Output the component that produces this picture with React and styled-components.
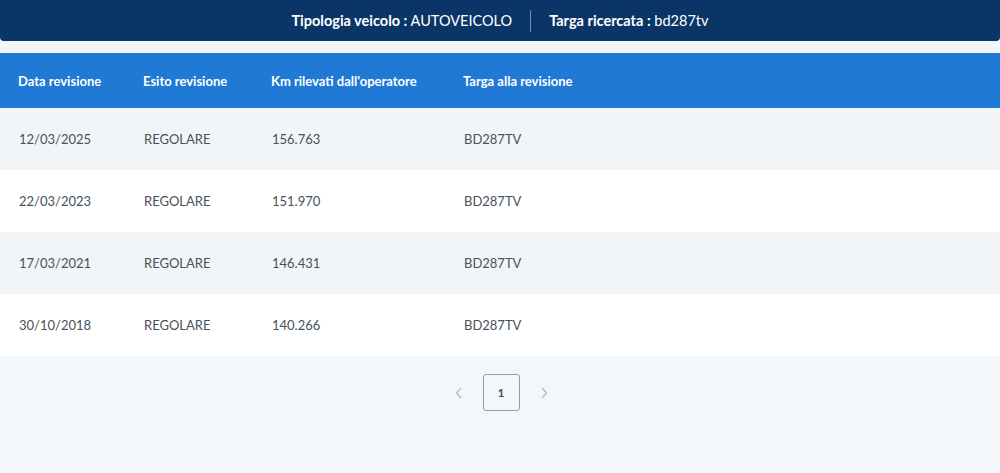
import React from 'react';
import styled, { createGlobalStyle } from 'styled-components';

const Global = createGlobalStyle`
  html, body {
    margin: 0;
    padding: 0;
    background: #f4f7fa;
    font-family: Lato, "Open Sans", "Liberation Sans", sans-serif;
  }
`;

const Page = styled.div`
  width: 1000px;
  height: 473px;
  overflow: hidden;
  background: #f4f7fa;
`;

const TopBar = styled.div`
  height: 41px;
  background: #0c3567;
  border-radius: 0 0 4px 4px;
  display: flex;
  align-items: center;
  justify-content: center;
  color: #fff;
  font-size: 14.5px;
`;

const Info = styled.span`
  padding: 0 18px;
  b { font-weight: 700; }
`;

const Divider = styled.span`
  width: 1px;
  height: 22px;
  background: rgba(255, 255, 255, 0.45);
`;

const Table = styled.div`
  margin-top: 12px;
`;

const Row = styled.div`
  display: grid;
  grid-template-columns: 125px 128px 192px 1fr;
  align-items: center;
  padding-left: ${p => (p.head ? '18px' : '19px')};
  height: ${p => (p.head ? '55px' : '62px')};
  background: ${p => (p.head ? '#2079d4' : p.alt ? '#f1f5f8' : '#ffffff')};
  color: ${p => (p.head ? '#ffffff' : '#46525c')};
  font-size: 13px;
  font-weight: ${p => (p.head ? 700 : 400)};
`;

const Cell = styled.div`
  white-space: nowrap;
`;

const Pager = styled.div`
  display: flex;
  justify-content: center;
  align-items: center;
  gap: 18px;
  padding-top: 18px;
  padding-left: 2px;
`;

const Arrow = styled.span`
  color: #b8c2ca;
  display: flex;
  width: 12px;
  justify-content: center;
`;

const PageBox = styled.div`
  width: 35px;
  height: 35px;
  border: 1px solid #8aa3ab;
  border-radius: 3px;
  display: flex;
  align-items: center;
  justify-content: center;
  font-size: 12px;
  font-weight: 700;
  color: #41505a;
`;

const rows = [
  ['12/03/2025', 'REGOLARE', '156.763', 'BD287TV'],
  ['22/03/2023', 'REGOLARE', '151.970', 'BD287TV'],
  ['17/03/2021', 'REGOLARE', '146.431', 'BD287TV'],
  ['30/10/2018', 'REGOLARE', '140.266', 'BD287TV'],
];

const Chevron = ({ left }) => (
  <svg width="8" height="12" viewBox="0 0 8 12" fill="none" stroke="currentColor" strokeWidth="1.6">
    <path d={left ? 'M6 1 L1.5 6 L6 11' : 'M2 1 L6.5 6 L2 11'} />
  </svg>
);

export default function App() {
  return (
    <Page>
      <Global />
      <TopBar>
        <Info><b>Tipologia veicolo :</b> AUTOVEICOLO</Info>
        <Divider />
        <Info><b>Targa ricercata :</b> bd287tv</Info>
      </TopBar>
      <Table>
        <Row head>
          <Cell>Data revisione</Cell>
          <Cell>Esito revisione</Cell>
          <Cell>Km rilevati dall'operatore</Cell>
          <Cell>Targa alla revisione</Cell>
        </Row>
        {rows.map((r, i) => (
          <Row key={i} alt={i % 2 === 0}>
            {r.map((c, j) => <Cell key={j}>{c}</Cell>)}
          </Row>
        ))}
      </Table>
      <Pager>
        <Arrow><Chevron left /></Arrow>
        <PageBox>1</PageBox>
        <Arrow><Chevron /></Arrow>
      </Pager>
    </Page>
  );
}
